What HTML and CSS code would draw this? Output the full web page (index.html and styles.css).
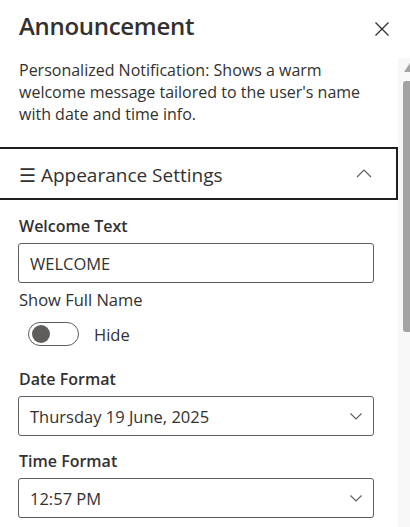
FILE: index.html
```html
<!DOCTYPE html>
<html>
<head>
<meta charset="utf-8">
<link rel="stylesheet" href="styles.css">
</head>
<body>
<div class="frame">
  <div class="panel">
    <div class="head">
      <h1 class="title">Announcement</h1>
      <svg class="close" width="16" height="16" viewBox="0 0 16 16"><path d="M1.5 1.5 L14.5 14.5 M14.5 1.5 L1.5 14.5" stroke="#323130" stroke-width="1.3" fill="none"/></svg>
    </div>
    <p class="desc">Personalized Notification: Shows a warm welcome message tailored to the user's name with date and time info.</p>
    <div class="acc">
      <span class="acc-title">☰ Appearance Settings</span>
      <svg class="acc-chev" width="16" height="9" viewBox="0 0 16 9"><path d="M1 8 L8 1 L15 8" stroke="#605e5c" stroke-width="1.2" fill="none"/></svg>
    </div>
    <div class="fields">
      <label class="lbl">Welcome Text</label>
      <div class="input">WELCOME</div>
      <div class="plain">Show Full Name</div>
      <div class="toggle-row">
        <span class="toggle"><span class="knob"></span></span>
        <span class="toggle-text">Hide</span>
      </div>
      <label class="lbl lbl-gap">Date Format</label>
      <div class="input dd">Thursday 19 June, 2025
        <svg class="dd-chev" width="12" height="7" viewBox="0 0 12 7"><path d="M0.5 0.5 L6 6 L11.5 0.5" stroke="#605e5c" stroke-width="1.1" fill="none"/></svg>
      </div>
      <label class="lbl">Time Format</label>
      <div class="input dd">12:57 PM
        <svg class="dd-chev" width="12" height="7" viewBox="0 0 12 7"><path d="M0.5 0.5 L6 6 L11.5 0.5" stroke="#605e5c" stroke-width="1.1" fill="none"/></svg>
      </div>
    </div>
  </div>
  <div class="sbar">
    <div class="sb-arrow"></div>
    <div class="sb-thumb"></div>
  </div>
</div>
</body>
</html>
```
FILE: styles.css
```css
html, body { margin: 0; padding: 0; background: #fff; }
body {
  font-family: "Open Sans", "Noto Sans", sans-serif;
  color: #323130;
  width: 410px;
  height: 527px;
  overflow: hidden;
}
.frame { display: flex; }
.panel { width: 398px; flex: none; }
.head {
  display: flex;
  justify-content: space-between;
  align-items: flex-start;
  padding: 10px 8px 0 19px;
}
.title {
  margin: 0;
  font-size: 24px;
  font-weight: 600;
  line-height: 32px;
  letter-spacing: -0.3px;
}
.close { margin-top: 11px; }
.desc {
  margin: 17px 20px 0 19px;
  font-size: 16px;
  line-height: 22px;
}
.acc {
  margin-top: 22px;
  margin-left: -2px;
  height: 47px;
  border: 2px solid #201f1e;
  display: flex;
  align-items: center;
  justify-content: space-between;
  padding: 2px 24px 0 19px;
}
.acc-title { font-size: 19px; line-height: 24px; }
.acc-chev { margin-top: -2px; }
.fields {
  padding: 15px 24px 0 19px;
  display: flex;
  flex-direction: column;
}
.lbl {
  font-size: 16px;
  font-weight: 600;
  line-height: 22px;
  margin-bottom: 6px;
}
.lbl-gap { margin-top: 22px; }
.input {
  height: 38px;
  border: 1px solid #605e5c;
  border-radius: 3px;
  box-sizing: content-box;
  display: flex;
  align-items: center;
  padding: 0 11px;
  font-size: 16.5px;
  margin-bottom: 14px;
  margin-left: -1px;
}
.dd { justify-content: space-between; margin-bottom: 14px; }
.plain { font-size: 16.5px; line-height: 22px; margin-top: -8px; }
.toggle-row {
  display: flex;
  align-items: center;
  margin-top: 11px;
  padding-left: 9px;
}
.toggle {
  height: 22px;
  border: 1px solid #605e5c;
  border-radius: 12px;
  display: flex;
  align-items: center;
  padding-left: 3px;
  box-sizing: content-box;
  width: 46px;
}
.knob {
  width: 18px;
  height: 18px;
  border-radius: 50%;
  background: #605e5c;
}
.toggle-text { margin-left: 15px; font-size: 16.5px; }
.sbar {
  width: 12px;
  flex: none;
  margin-top: 58px;
  height: 469px;
  background: #f8f8f8;
  display: flex;
  flex-direction: column;
  align-items: flex-end;
}
.sb-arrow {
  margin-top: 5px;
  width: 0; height: 0;
  border-left: 6px solid transparent;
  border-bottom: 9px solid #a3a3a3;
}
.sb-thumb {
  margin-top: 9px;
  width: 7px;
  height: 251px;
  background: #a3a3a3;
  border-radius: 3px 0 0 3px;
}
```
